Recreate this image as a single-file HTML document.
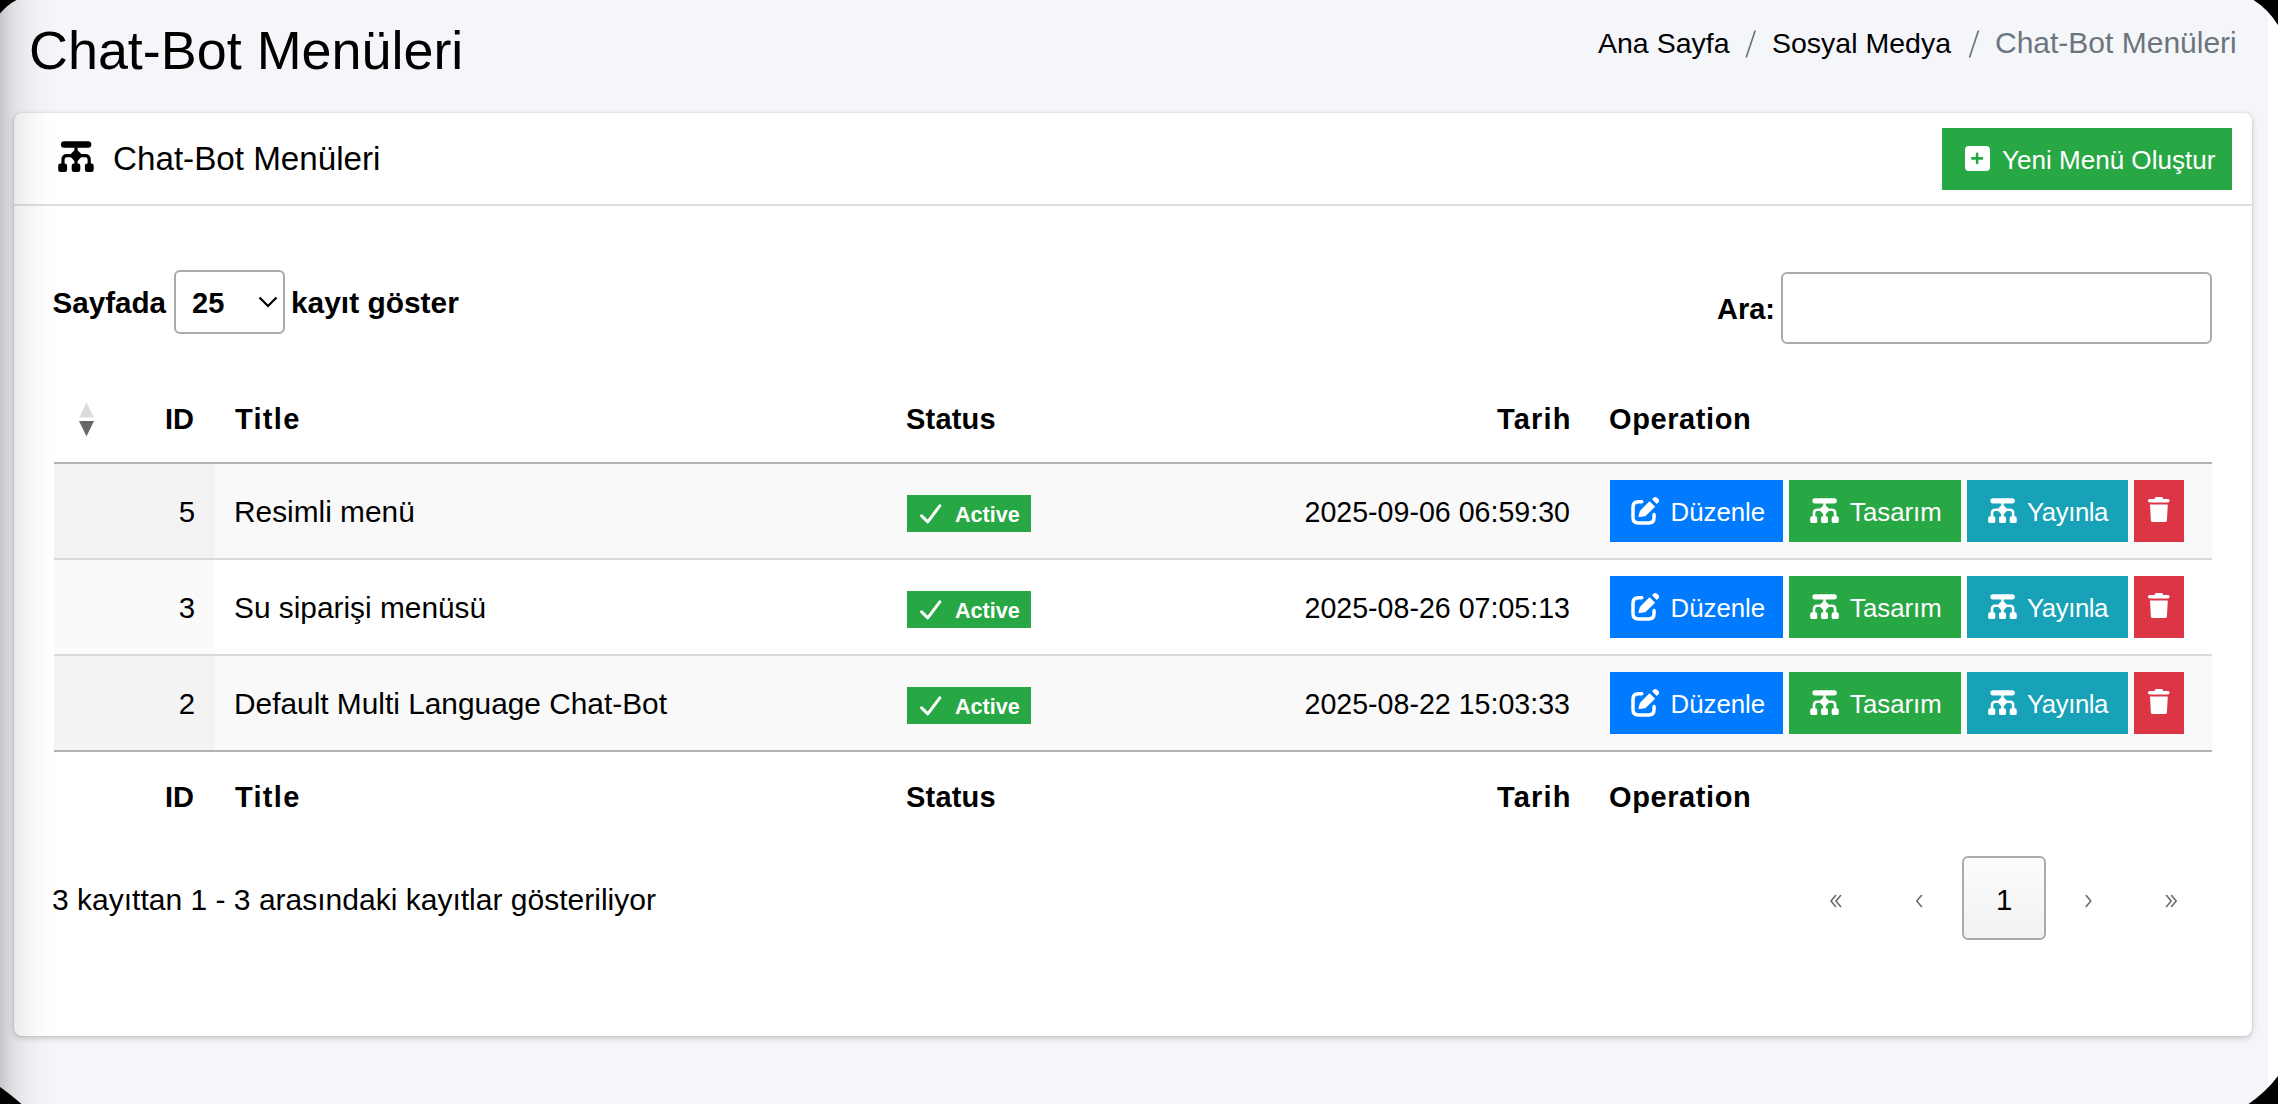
<!DOCTYPE html>
<html><head><meta charset="utf-8">
<style>
html,body{margin:0;padding:0}
body{width:2278px;height:1104px;overflow:hidden;position:relative;background:#f4f6f9;font-family:"Liberation Sans",sans-serif;color:#000}
.a{position:absolute}
.t{position:absolute;white-space:nowrap;line-height:40px}
.b{font-weight:bold}
.card{left:14px;top:113px;width:2238px;height:923px;background:#fff;border-radius:8px;box-shadow:0 0 2px rgba(0,0,0,.125),0 2px 6px rgba(0,0,0,.2)}
.btn{position:absolute;height:62px}
.bl{background:#007bff}.gr{background:#28a745}.cy{background:#17a2b8}.rd{background:#dc3545}
.wt{color:#fff}
.row{position:absolute;left:54px;width:2158px;height:94px}
.badge{position:absolute;left:907px;width:124px;height:37px;background:#28a745}
</style></head>
<body>
<!-- right white strip -->
<div class="a" style="left:2268px;top:0;width:10px;height:1104px;background:#fff"></div>

<!-- content header -->
<div class="t" style="left:29px;top:30px;font-size:53.9px;line-height:40px;color:#000">Chat-Bot Menüleri</div>

<div class="t" style="left:1598px;top:23px;font-size:28.5px;color:#000">Ana Sayfa</div>
<svg class="a" style="left:1740px;top:25px" width="20" height="38"><line x1="15.2" y1="5.5" x2="6.2" y2="32.5" stroke="#6c757d" stroke-width="1.7"/></svg>
<div class="t" style="left:1772px;top:23px;font-size:28.5px;color:#000">Sosyal Medya</div>
<svg class="a" style="left:1964px;top:25px" width="20" height="38"><line x1="14.5" y1="5.5" x2="5.5" y2="32.5" stroke="#6c757d" stroke-width="1.7"/></svg>
<div class="t" style="left:1995px;top:23px;font-size:30px;color:#6c757d">Chat-Bot Menüleri</div>

<!-- card -->
<div class="a card"></div>
<div class="a" style="left:14px;top:204px;width:2238px;height:2px;background:#dfdfdf"></div>

<!-- header icon -->
<svg class="a" style="left:58px;top:141px" width="36" height="31" viewBox="0 0 36 31">
 <g fill="#000">
  <rect x="2.9" y="0.2" width="30.4" height="6.6" rx="3.3"/>
  <rect x="16.4" y="5" width="3.2" height="19"/>
  <polygon points="16.4,9.2 19.6,9.2 23.3,13.1 23.3,16.1 19.6,20.1 16.4,20.1 12.7,16.1 12.7,13.1"/>
  <rect x="0.2" y="22.5" width="8.9" height="8.5" rx="2.3"/>
  <rect x="13.7" y="22.5" width="8.6" height="8.5" rx="2.3"/>
  <rect x="26.9" y="22.5" width="8.8" height="8.5" rx="2.3"/>
 </g>
 <path d="M5 24 V18.6 Q5 14.6 9 14.6 H27.2 Q31.2 14.6 31.2 18.6 V24" fill="none" stroke="#000" stroke-width="3.2"/>
</svg>
<div class="t" style="left:113px;top:139px;font-size:33.2px">Chat-Bot Menüleri</div>

<!-- green create button -->
<div class="btn gr" style="left:1942px;top:128px;width:290px"></div>
<svg class="a" style="left:1965px;top:146px" width="25" height="25" viewBox="0 0 25 25">
 <rect x="0" y="0" width="25" height="25" rx="4" fill="#fff"/>
 <path d="M7.2 12.4 H17 M12.1 7.9 V16.9" stroke="#28a745" stroke-width="2.6" stroke-linecap="round"/>
</svg>
<div class="t wt" style="left:2002px;top:140px;font-size:26.05px">Yeni Menü Oluştur</div>

<!-- length select -->
<div class="t b" style="left:52.5px;top:283px;font-size:29.6px">Sayfada</div>
<div class="a" style="left:174px;top:270px;width:107px;height:60px;border:2px solid #aaa;border-radius:6px"></div>
<div class="t b" style="left:192px;top:283px;font-size:29px">25</div>
<svg class="a" style="left:258px;top:295px" width="20" height="14" viewBox="0 0 20 14">
 <path d="M1.5 2.5 L10 11 L18.5 2.5" fill="none" stroke="#000" stroke-width="2.2"/>
</svg>
<div class="t b" style="left:291px;top:283px;font-size:29.9px">kayıt göster</div>

<!-- search -->
<div class="t b" style="left:1717px;top:289px;font-size:29px">Ara:</div>
<div class="a" style="left:1781px;top:272px;width:427px;height:68px;border:2px solid #aaa;border-radius:6px"></div>

<!-- table header -->
<svg class="a" style="left:79px;top:402px" width="16" height="36" viewBox="0 0 16 36">
 <polygon points="7.5,0.6 15,15.6 0.3,15.6" fill="#dcdcdc"/>
 <polygon points="0,19 15,19 7.5,34.2" fill="#666"/>
</svg>
<div class="t b" style="left:165px;top:399px;font-size:29px">ID</div>
<div class="t b" style="left:235px;top:399px;font-size:29px;letter-spacing:1.3px">Title</div>
<div class="t b" style="left:906px;top:399px;font-size:29px;letter-spacing:.2px">Status</div>
<div class="t b" style="left:1497px;top:399px;font-size:29px;letter-spacing:1.2px">Tarih</div>
<div class="t b" style="left:1609px;top:399px;font-size:29px;letter-spacing:.6px">Operation</div>
<div class="a" style="left:54px;top:462px;width:2158px;height:2px;background:#b3b3b3"></div>

<!-- rows -->
<div class="row" style="top:464px;background:#f9f9f9"></div>
<div class="a" style="left:54px;top:464px;width:161px;height:94px;background:#f3f3f3"></div>
<div class="a" style="left:54px;top:558px;width:2158px;height:2px;background:#d9d9d9"></div>
<div class="row" style="top:560px;background:#fff"></div>
<div class="a" style="left:54px;top:560px;width:161px;height:94px;background:#fafafa"></div>
<div class="a" style="left:54px;top:654px;width:2158px;height:2px;background:#d9d9d9"></div>
<div class="row" style="top:656px;background:#f9f9f9"></div>
<div class="a" style="left:54px;top:656px;width:161px;height:94px;background:#f3f3f3"></div>
<div class="a" style="left:54px;top:750px;width:2158px;height:2px;background:#b3b3b3"></div>

<!--ROWS-->
<div class="t" style="left:100px;width:95px;text-align:right;top:492px;font-size:29.4px">5</div>
<div class="t" style="left:234px;top:492px;font-size:29.85px">Resimli menü</div>
<div class="badge" style="top:495px"></div>
<svg class="a" style="left:920px;top:504px" width="22" height="20" viewBox="0 0 22 20"><polyline points="1.6,11.8 7.8,17.8 19.8,1.8" fill="none" stroke="#fff" stroke-width="3" stroke-linecap="round" stroke-linejoin="round"/></svg>
<div class="t b wt" style="left:955px;top:494.5px;font-size:21.6px">Active</div>
<div class="t" style="left:1270px;width:300px;text-align:right;top:492px;font-size:28.6px">2025-09-06 06:59:30</div>
<div class="btn bl" style="left:1610px;top:480px;width:173px"></div>
<svg class="a" style="left:1631px;top:496.7px" width="28" height="28" viewBox="0 0 28 28"><path d="M10.75 4.85 H7.5 Q2 4.85 2 10.35 V20.5 Q2 26 7.5 26 H17.55 Q23.05 26 23.05 20.5 V17.5" fill="none" stroke="#fff" stroke-width="3.5" stroke-linecap="round"/><path d="M7.4 20.1 Q8.2 15.5 9.3 13.5 L18.6 4.2 L24.1 9.7 L14.6 18.9 Q11.5 19.8 7.4 20.1 Z" fill="#fff"/><path d="M21 2.3 L25.8 7.1 L27.6 5.3 Q29 3.9 27.6 2.2 L26 0.7 Q24.2 -0.8 22.6 0.7 Z" fill="#fff"/></svg>
<div class="t wt" style="left:1670.5px;top:492px;font-size:25.8px">Düzenle</div>
<div class="btn gr" style="left:1789px;top:480px;width:172px"></div>
<svg class="a" style="left:1810px;top:498px" width="29" height="25" viewBox="0 0 36 31"><g fill="#fff"><rect x="2.9" y="0.2" width="30.4" height="6.6" rx="3.3"/><rect x="16.4" y="5" width="3.2" height="19"/><polygon points="16.4,9.2 19.6,9.2 23.3,13.1 23.3,16.1 19.6,20.1 16.4,20.1 12.7,16.1 12.7,13.1"/><rect x="0.2" y="22.5" width="8.9" height="8.5" rx="2.3"/><rect x="13.7" y="22.5" width="8.6" height="8.5" rx="2.3"/><rect x="26.9" y="22.5" width="8.8" height="8.5" rx="2.3"/></g><path d="M5 24 V18.6 Q5 14.6 9 14.6 H27.2 Q31.2 14.6 31.2 18.6 V24" fill="none" stroke="#fff" stroke-width="3.2"/></svg>
<div class="t wt" style="left:1850px;top:492px;font-size:25.8px">Tasarım</div>
<div class="btn cy" style="left:1967px;top:480px;width:161px"></div>
<svg class="a" style="left:1988px;top:498px" width="29" height="25" viewBox="0 0 36 31"><g fill="#fff"><rect x="2.9" y="0.2" width="30.4" height="6.6" rx="3.3"/><rect x="16.4" y="5" width="3.2" height="19"/><polygon points="16.4,9.2 19.6,9.2 23.3,13.1 23.3,16.1 19.6,20.1 16.4,20.1 12.7,16.1 12.7,13.1"/><rect x="0.2" y="22.5" width="8.9" height="8.5" rx="2.3"/><rect x="13.7" y="22.5" width="8.6" height="8.5" rx="2.3"/><rect x="26.9" y="22.5" width="8.8" height="8.5" rx="2.3"/></g><path d="M5 24 V18.6 Q5 14.6 9 14.6 H27.2 Q31.2 14.6 31.2 18.6 V24" fill="none" stroke="#fff" stroke-width="3.2"/></svg>
<div class="t wt" style="left:2027px;top:492px;font-size:25.8px;letter-spacing:-.45px">Yayınla</div>
<div class="btn rd" style="left:2134px;top:480px;width:50px"></div>
<svg class="a" style="left:2148px;top:497px" width="22" height="25" viewBox="0 0 22 25"><rect x="6.8" y="0" width="8.2" height="3.4" rx="1.4" fill="#fff"/><rect x="0" y="2" width="21.6" height="3.6" rx="1.8" fill="#fff"/><path d="M2 7.6 H19.8 L18.9 23.4 Q18.8 25 17.2 25 H4.6 Q3 25 2.9 23.4 Z" fill="#fff"/></svg>
<div class="t" style="left:100px;width:95px;text-align:right;top:588px;font-size:29.4px">3</div>
<div class="t" style="left:234px;top:588px;font-size:29.85px">Su siparişi menüsü</div>
<div class="badge" style="top:591px"></div>
<svg class="a" style="left:920px;top:600px" width="22" height="20" viewBox="0 0 22 20"><polyline points="1.6,11.8 7.8,17.8 19.8,1.8" fill="none" stroke="#fff" stroke-width="3" stroke-linecap="round" stroke-linejoin="round"/></svg>
<div class="t b wt" style="left:955px;top:590.5px;font-size:21.6px">Active</div>
<div class="t" style="left:1270px;width:300px;text-align:right;top:588px;font-size:28.6px">2025-08-26 07:05:13</div>
<div class="btn bl" style="left:1610px;top:576px;width:173px"></div>
<svg class="a" style="left:1631px;top:592.7px" width="28" height="28" viewBox="0 0 28 28"><path d="M10.75 4.85 H7.5 Q2 4.85 2 10.35 V20.5 Q2 26 7.5 26 H17.55 Q23.05 26 23.05 20.5 V17.5" fill="none" stroke="#fff" stroke-width="3.5" stroke-linecap="round"/><path d="M7.4 20.1 Q8.2 15.5 9.3 13.5 L18.6 4.2 L24.1 9.7 L14.6 18.9 Q11.5 19.8 7.4 20.1 Z" fill="#fff"/><path d="M21 2.3 L25.8 7.1 L27.6 5.3 Q29 3.9 27.6 2.2 L26 0.7 Q24.2 -0.8 22.6 0.7 Z" fill="#fff"/></svg>
<div class="t wt" style="left:1670.5px;top:588px;font-size:25.8px">Düzenle</div>
<div class="btn gr" style="left:1789px;top:576px;width:172px"></div>
<svg class="a" style="left:1810px;top:594px" width="29" height="25" viewBox="0 0 36 31"><g fill="#fff"><rect x="2.9" y="0.2" width="30.4" height="6.6" rx="3.3"/><rect x="16.4" y="5" width="3.2" height="19"/><polygon points="16.4,9.2 19.6,9.2 23.3,13.1 23.3,16.1 19.6,20.1 16.4,20.1 12.7,16.1 12.7,13.1"/><rect x="0.2" y="22.5" width="8.9" height="8.5" rx="2.3"/><rect x="13.7" y="22.5" width="8.6" height="8.5" rx="2.3"/><rect x="26.9" y="22.5" width="8.8" height="8.5" rx="2.3"/></g><path d="M5 24 V18.6 Q5 14.6 9 14.6 H27.2 Q31.2 14.6 31.2 18.6 V24" fill="none" stroke="#fff" stroke-width="3.2"/></svg>
<div class="t wt" style="left:1850px;top:588px;font-size:25.8px">Tasarım</div>
<div class="btn cy" style="left:1967px;top:576px;width:161px"></div>
<svg class="a" style="left:1988px;top:594px" width="29" height="25" viewBox="0 0 36 31"><g fill="#fff"><rect x="2.9" y="0.2" width="30.4" height="6.6" rx="3.3"/><rect x="16.4" y="5" width="3.2" height="19"/><polygon points="16.4,9.2 19.6,9.2 23.3,13.1 23.3,16.1 19.6,20.1 16.4,20.1 12.7,16.1 12.7,13.1"/><rect x="0.2" y="22.5" width="8.9" height="8.5" rx="2.3"/><rect x="13.7" y="22.5" width="8.6" height="8.5" rx="2.3"/><rect x="26.9" y="22.5" width="8.8" height="8.5" rx="2.3"/></g><path d="M5 24 V18.6 Q5 14.6 9 14.6 H27.2 Q31.2 14.6 31.2 18.6 V24" fill="none" stroke="#fff" stroke-width="3.2"/></svg>
<div class="t wt" style="left:2027px;top:588px;font-size:25.8px;letter-spacing:-.45px">Yayınla</div>
<div class="btn rd" style="left:2134px;top:576px;width:50px"></div>
<svg class="a" style="left:2148px;top:593px" width="22" height="25" viewBox="0 0 22 25"><rect x="6.8" y="0" width="8.2" height="3.4" rx="1.4" fill="#fff"/><rect x="0" y="2" width="21.6" height="3.6" rx="1.8" fill="#fff"/><path d="M2 7.6 H19.8 L18.9 23.4 Q18.8 25 17.2 25 H4.6 Q3 25 2.9 23.4 Z" fill="#fff"/></svg>
<div class="t" style="left:100px;width:95px;text-align:right;top:684px;font-size:29.4px">2</div>
<div class="t" style="left:234px;top:684px;font-size:29.85px">Default Multi Language Chat-Bot</div>
<div class="badge" style="top:687px"></div>
<svg class="a" style="left:920px;top:696px" width="22" height="20" viewBox="0 0 22 20"><polyline points="1.6,11.8 7.8,17.8 19.8,1.8" fill="none" stroke="#fff" stroke-width="3" stroke-linecap="round" stroke-linejoin="round"/></svg>
<div class="t b wt" style="left:955px;top:686.5px;font-size:21.6px">Active</div>
<div class="t" style="left:1270px;width:300px;text-align:right;top:684px;font-size:28.6px">2025-08-22 15:03:33</div>
<div class="btn bl" style="left:1610px;top:672px;width:173px"></div>
<svg class="a" style="left:1631px;top:688.7px" width="28" height="28" viewBox="0 0 28 28"><path d="M10.75 4.85 H7.5 Q2 4.85 2 10.35 V20.5 Q2 26 7.5 26 H17.55 Q23.05 26 23.05 20.5 V17.5" fill="none" stroke="#fff" stroke-width="3.5" stroke-linecap="round"/><path d="M7.4 20.1 Q8.2 15.5 9.3 13.5 L18.6 4.2 L24.1 9.7 L14.6 18.9 Q11.5 19.8 7.4 20.1 Z" fill="#fff"/><path d="M21 2.3 L25.8 7.1 L27.6 5.3 Q29 3.9 27.6 2.2 L26 0.7 Q24.2 -0.8 22.6 0.7 Z" fill="#fff"/></svg>
<div class="t wt" style="left:1670.5px;top:684px;font-size:25.8px">Düzenle</div>
<div class="btn gr" style="left:1789px;top:672px;width:172px"></div>
<svg class="a" style="left:1810px;top:690px" width="29" height="25" viewBox="0 0 36 31"><g fill="#fff"><rect x="2.9" y="0.2" width="30.4" height="6.6" rx="3.3"/><rect x="16.4" y="5" width="3.2" height="19"/><polygon points="16.4,9.2 19.6,9.2 23.3,13.1 23.3,16.1 19.6,20.1 16.4,20.1 12.7,16.1 12.7,13.1"/><rect x="0.2" y="22.5" width="8.9" height="8.5" rx="2.3"/><rect x="13.7" y="22.5" width="8.6" height="8.5" rx="2.3"/><rect x="26.9" y="22.5" width="8.8" height="8.5" rx="2.3"/></g><path d="M5 24 V18.6 Q5 14.6 9 14.6 H27.2 Q31.2 14.6 31.2 18.6 V24" fill="none" stroke="#fff" stroke-width="3.2"/></svg>
<div class="t wt" style="left:1850px;top:684px;font-size:25.8px">Tasarım</div>
<div class="btn cy" style="left:1967px;top:672px;width:161px"></div>
<svg class="a" style="left:1988px;top:690px" width="29" height="25" viewBox="0 0 36 31"><g fill="#fff"><rect x="2.9" y="0.2" width="30.4" height="6.6" rx="3.3"/><rect x="16.4" y="5" width="3.2" height="19"/><polygon points="16.4,9.2 19.6,9.2 23.3,13.1 23.3,16.1 19.6,20.1 16.4,20.1 12.7,16.1 12.7,13.1"/><rect x="0.2" y="22.5" width="8.9" height="8.5" rx="2.3"/><rect x="13.7" y="22.5" width="8.6" height="8.5" rx="2.3"/><rect x="26.9" y="22.5" width="8.8" height="8.5" rx="2.3"/></g><path d="M5 24 V18.6 Q5 14.6 9 14.6 H27.2 Q31.2 14.6 31.2 18.6 V24" fill="none" stroke="#fff" stroke-width="3.2"/></svg>
<div class="t wt" style="left:2027px;top:684px;font-size:25.8px;letter-spacing:-.45px">Yayınla</div>
<div class="btn rd" style="left:2134px;top:672px;width:50px"></div>
<svg class="a" style="left:2148px;top:689px" width="22" height="25" viewBox="0 0 22 25"><rect x="6.8" y="0" width="8.2" height="3.4" rx="1.4" fill="#fff"/><rect x="0" y="2" width="21.6" height="3.6" rx="1.8" fill="#fff"/><path d="M2 7.6 H19.8 L18.9 23.4 Q18.8 25 17.2 25 H4.6 Q3 25 2.9 23.4 Z" fill="#fff"/></svg>
<!--/ROWS-->

<!-- tfoot -->
<div class="t b" style="left:165px;top:777px;font-size:29px">ID</div>
<div class="t b" style="left:235px;top:777px;font-size:29px;letter-spacing:1.3px">Title</div>
<div class="t b" style="left:906px;top:777px;font-size:29px;letter-spacing:.2px">Status</div>
<div class="t b" style="left:1497px;top:777px;font-size:29px;letter-spacing:1.2px">Tarih</div>
<div class="t b" style="left:1609px;top:777px;font-size:29px;letter-spacing:.6px">Operation</div>

<!-- info -->
<div class="t" style="left:52px;top:880px;font-size:30.03px">3 kayıttan 1 - 3 arasındaki kayıtlar gösteriliyor</div>

<!-- pagination -->
<svg class="a" style="left:1800px;top:880px" width="400" height="40" viewBox="1800 880 400 40">
 <g fill="none" stroke="#6a6a6a" stroke-width="1.6" stroke-linecap="round" stroke-linejoin="round">
  <polyline points="1835.6,895.6 1831,901 1835.6,906.4"/>
  <polyline points="1840.6,895.6 1836,901 1840.6,906.4"/>
  <polyline points="1921.4,895.6 1916.8,901 1921.4,906.4"/>
  <polyline points="2086.2,895.6 2090.8,901 2086.2,906.4"/>
  <polyline points="2166.6,895.6 2171.2,901 2166.6,906.4"/>
  <polyline points="2171.6,895.6 2176.2,901 2171.6,906.4"/>
 </g>
</svg>
<div class="a" style="left:1962px;top:856px;width:80px;height:80px;border:2px solid #aaa;border-radius:6px;background:linear-gradient(#fcfcfc,#f2f2f2)"></div>
<div class="t" style="left:1996px;top:880px;font-size:29.4px;color:#000">1</div>

<!-- left shadow overlay -->
<div class="a" style="left:0;top:0;width:56px;height:1104px;background:linear-gradient(to right,rgba(0,0,0,.19) 0px,rgba(0,0,0,.13) 8px,rgba(0,0,0,.085) 14px,rgba(0,0,0,.055) 22px,rgba(0,0,0,.032) 32px,rgba(0,0,0,.012) 44px,rgba(0,0,0,0) 56px)"></div>

<!-- corner masks -->
<svg class="a" style="left:0;top:0" width="2278" height="1104">
 <path d="M0 0 H16.5 Q7 5 0 13.5 Z" fill="#000"/>
 <path d="M2253.5 0 H2278 V25 Q2268 9 2253.5 0 Z" fill="#000"/>
 <path d="M0 1087 Q10 1094 21.5 1104 H0 Z" fill="#000"/>
 <path d="M2278 1076 Q2266 1092 2248.5 1104 H2278 Z" fill="#000"/>
</svg>
</body></html>
